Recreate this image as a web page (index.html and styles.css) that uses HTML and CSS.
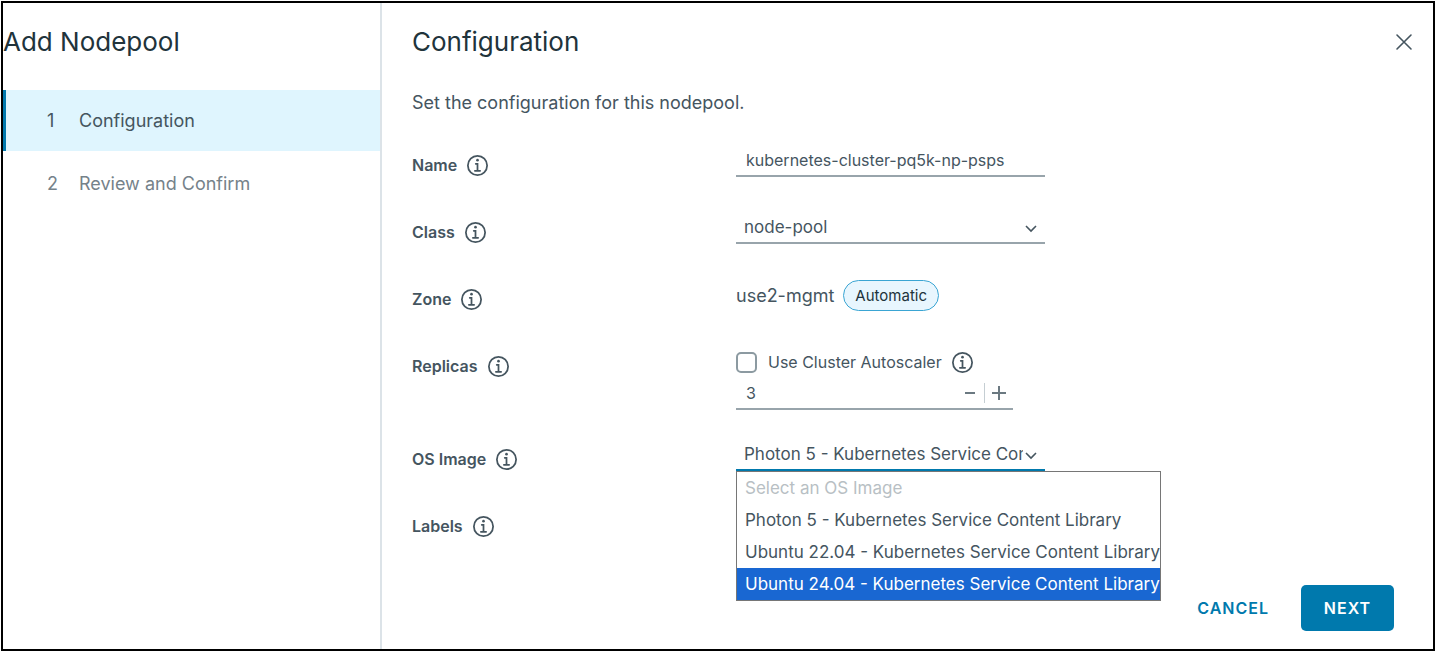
FILE: index.html
```
<!DOCTYPE html>
<html lang="en">
    <head>
        <meta charset="UTF-8">
        <title>Add Nodepool</title>
        <link rel="stylesheet" href="styles.css">
    </head>
    <body>
        <svg class="sprite" aria-hidden="true">
            <symbol id="icon-info" viewBox="6 6 24 24">
                <circle cx="18" cy="11.9" r="1.5"/>
                <path d="M21 23h-2v-8h-3a1 1 0 0 0 0 2h1v6h-2a1 1 0 1 0 0 2h6a1 1 0 0 0 0-2z"/>
                <path d="M18 6a12 12 0 1 0 12 12A12 12 0 0 0 18 6zm0 22a10 10 0 1 1 10-10 10 10 0 0 1-10 10z"/>
            </symbol>
            <symbol id="icon-caret" viewBox="0 0 12 8">
                <path d="M1 1l5 5 5-5" fill="none" stroke="currentColor" stroke-width="1.6"/>
            </symbol>
        </svg>
        <div class="wizard">
            <aside class="sidebar">
                <h1>Add Nodepool</h1>
                <ol class="steps">
                    <li><a href="#configuration" class="step active" aria-current="step"><span class="step-number">1</span>Configuration</a></li>
                    <li><a href="#review" class="step"><span class="step-number">2</span>Review and Confirm</a></li>
                </ol>
            </aside>
            <main id="configuration">
                <header>
                    <h2>Configuration</h2>
                    <button type="button" class="close-btn" aria-label="Close">
                        <svg viewBox="0 0 18 18"><path d="M2 2l14 14M16 2L2 16" fill="none" stroke="currentColor" stroke-width="1.6" stroke-linecap="round"/></svg>
                    </button>
                </header>
                <p class="intro">Set the configuration for this nodepool.</p>
                <form>
                    <div class="row">
                        <div class="row-label"><label for="name">Name</label><svg class="info"><use href="#icon-info"/></svg></div>
                        <input type="text" id="name" class="field" value="kubernetes-cluster-pq5k-np-psps">
                    </div>
                    <div class="row">
                        <div class="row-label"><label for="class">Class</label><svg class="info"><use href="#icon-info"/></svg></div>
                        <div class="select">
                            <select id="class" class="field">
                                <option>node-pool</option>
                            </select>
                            <svg class="caret"><use href="#icon-caret"/></svg>
                        </div>
                    </div>
                    <div class="row">
                        <div class="row-label"><span>Zone</span><svg class="info"><use href="#icon-info"/></svg></div>
                        <div class="zone">use2-mgmt <span class="badge">Automatic</span></div>
                    </div>
                    <div class="row replicas-row">
                        <div class="row-label"><label for="replicas">Replicas</label><svg class="info"><use href="#icon-info"/></svg></div>
                        <div>
                            <div class="check">
                                <input type="checkbox" id="autoscaler">
                                <label for="autoscaler">Use Cluster Autoscaler</label>
                                <svg class="info"><use href="#icon-info"/></svg>
                            </div>
                            <div class="stepper">
                                <input type="text" inputmode="numeric" id="replicas" value="3">
                                <button type="button" aria-label="Decrease"><svg viewBox="0 0 16 16"><path d="M3 8h10" stroke="currentColor" stroke-width="2"/></svg></button>
                                <button type="button" aria-label="Increase"><svg viewBox="0 0 16 16"><path d="M1 8h14M8 1v14" stroke="currentColor" stroke-width="2"/></svg></button>
                            </div>
                        </div>
                    </div>
                    <div class="row">
                        <div class="row-label"><label for="os-image">OS Image</label><svg class="info"><use href="#icon-info"/></svg></div>
                        <div class="select open">
                            <select id="os-image" class="field">
                                <option>Photon 5 - Kubernetes Service Content Library</option>
                                <option>Ubuntu 22.04 - Kubernetes Service Content Library</option>
                                <option>Ubuntu 24.04 - Kubernetes Service Content Library</option>
                            </select>
                            <svg class="caret"><use href="#icon-caret"/></svg>
                            <ul class="options" role="listbox" aria-label="OS Image">
                                <li role="option" class="disabled" aria-disabled="true">Select an OS Image</li>
                                <li role="option">Photon 5 - Kubernetes Service Content Library</li>
                                <li role="option">Ubuntu 22.04 - Kubernetes Service Content Library</li>
                                <li role="option" class="highlighted" aria-selected="true">Ubuntu 24.04 - Kubernetes Service Content Library</li>
                            </ul>
                        </div>
                    </div>
                    <div class="row">
                        <div class="row-label"><span>Labels</span><svg class="info"><use href="#icon-info"/></svg></div>
                    </div>
                </form>
                <footer>
                    <button type="button" class="btn btn-link">CANCEL</button>
                    <button type="button" class="btn btn-primary">NEXT</button>
                </footer>
            </main>
        </div>
    </body>
</html>
```
FILE: styles.css
```
*{
    box-sizing: border-box;
}
body{
    font-family: Inter, "Noto Sans", sans-serif;
    font-size: 16px;
    margin: 0;
    padding: 1px 4px 5px 1px;
    background-color: #FFF;
    color: #45555F;
}
h1, h2{
    color: #21333B;
    font-size: 26px;
    font-weight: 400;
    line-height: 32px;
    margin: 0;
}
input, select, button{
    font: inherit;
    color: inherit;
}
button{
    background: none;
    border: none;
    padding: 0;
    cursor: pointer;
}
.sprite{
    display: none;
}
.wizard{
    display: flex;
    min-height: calc(100vh - 6px);
    border: 2px solid #000;
}
.sidebar{
    flex: 0 0 379px;
    border-right: 2px solid #DCE3E8;
}
.sidebar h1{
    padding: 23px 0 32px;
}
.steps{
    display: grid;
    gap: 2px;
    list-style: none;
    margin: 0;
    padding: 0;
}
.step{
    display: flex;
    align-items: center;
    height: 61px;
    padding-left: 41px;
    border-left: 3px solid transparent;
    font-size: 18px;
    color: #75828A;
    text-decoration: none;
}
.step.active{
    background-color: #DFF5FE;
    border-left-color: #0079AD;
    color: #45555F;
}
.step-number{
    width: 32px;
}
main{
    flex: 1;
    display: flex;
    flex-direction: column;
    padding: 23px 20px 18px 30px;
}
header{
    display: flex;
    justify-content: space-between;
    align-items: center;
}
.close-btn{
    height: 18px;
}
.close-btn svg{
    display: block;
    width: 18px;
    height: 18px;
}
.intro{
    font-size: 18px;
    line-height: 24px;
    margin: 33px 0 30px;
}
.row{
    display: grid;
    grid-template-columns: 324px 1fr;
    align-items: start;
    min-height: 67px;
}
.replicas-row{
    min-height: 93px;
}
.row-label{
    display: flex;
    align-items: center;
    gap: 10px;
    height: 40px;
    font-weight: 600;
}
.info{
    width: 21px;
    height: 21px;
    fill: currentColor;
}
.field{
    width: 309px;
    height: 32px;
    padding: 0 10px;
    border: none;
    border-bottom: 2px solid #98A4AB;
    border-radius: 0;
    background: none;
    outline: none;
}
.select{
    position: relative;
    width: 309px;
}
.select .field{
    appearance: none;
    padding: 0 22px 0 8px;
    font-size: 17px;
}
.select.open .field{
    border-bottom-color: #0079AD;
}
.caret{
    position: absolute;
    top: 13px;
    right: 8px;
    width: 12px;
    height: 8px;
    pointer-events: none;
}
.options{
    position: absolute;
    top: 32px;
    left: 0;
    z-index: 1;
    min-width: 425px;
    margin: 0;
    padding: 0;
    list-style: none;
    background-color: #FFF;
    border: 1px solid #767676;
    font-size: 17px;
    white-space: nowrap;
}
.options li{
    padding: 0 0 0 8px;
    line-height: 32px;
}
.options .disabled{
    color: #B8BFC4;
}
.options .highlighted{
    background-color: #1967D2;
    color: #FFF;
}
.zone{
    display: flex;
    align-items: center;
    gap: 9px;
    height: 32px;
    font-size: 18px;
}
.badge{
    padding: 0 11px;
    border: 1px solid #3AA5D3;
    border-radius: 16px;
    background-color: #E8F6FE;
    color: #21333B;
    font-size: 15px;
    line-height: 29px;
}
.check{
    display: flex;
    align-items: center;
    height: 32px;
}
.check input{
    appearance: none;
    width: 21px;
    height: 21px;
    margin: 0 11px 0 0;
    border: 2px solid #8C9AA1;
    border-radius: 5px;
}
.check .info{
    margin-left: 10px;
}
.stepper{
    display: flex;
    align-items: center;
    width: 277px;
    height: 32px;
    border-bottom: 2px solid #98A4AB;
}
.stepper input{
    flex: 1;
    min-width: 0;
    padding: 0 10px;
    border: none;
    background: none;
    outline: none;
}
.stepper button{
    width: 29px;
    height: 20px;
    color: #6B7981;
}
.stepper button + button{
    border-left: 1px solid #C5CED3;
}
.stepper svg{
    display: block;
    width: 16px;
    height: 16px;
    margin: 0 auto;
}
footer{
    display: flex;
    justify-content: flex-end;
    gap: 32px;
    margin-top: auto;
    padding-right: 19px;
}
.btn{
    height: 46px;
    border-radius: 5px;
    font-weight: 600;
    letter-spacing: 1px;
}
.btn-link{
    color: #0079AD;
}
.btn-primary{
    min-width: 93px;
    background-color: #0079AD;
    color: #FFF;
}
```
